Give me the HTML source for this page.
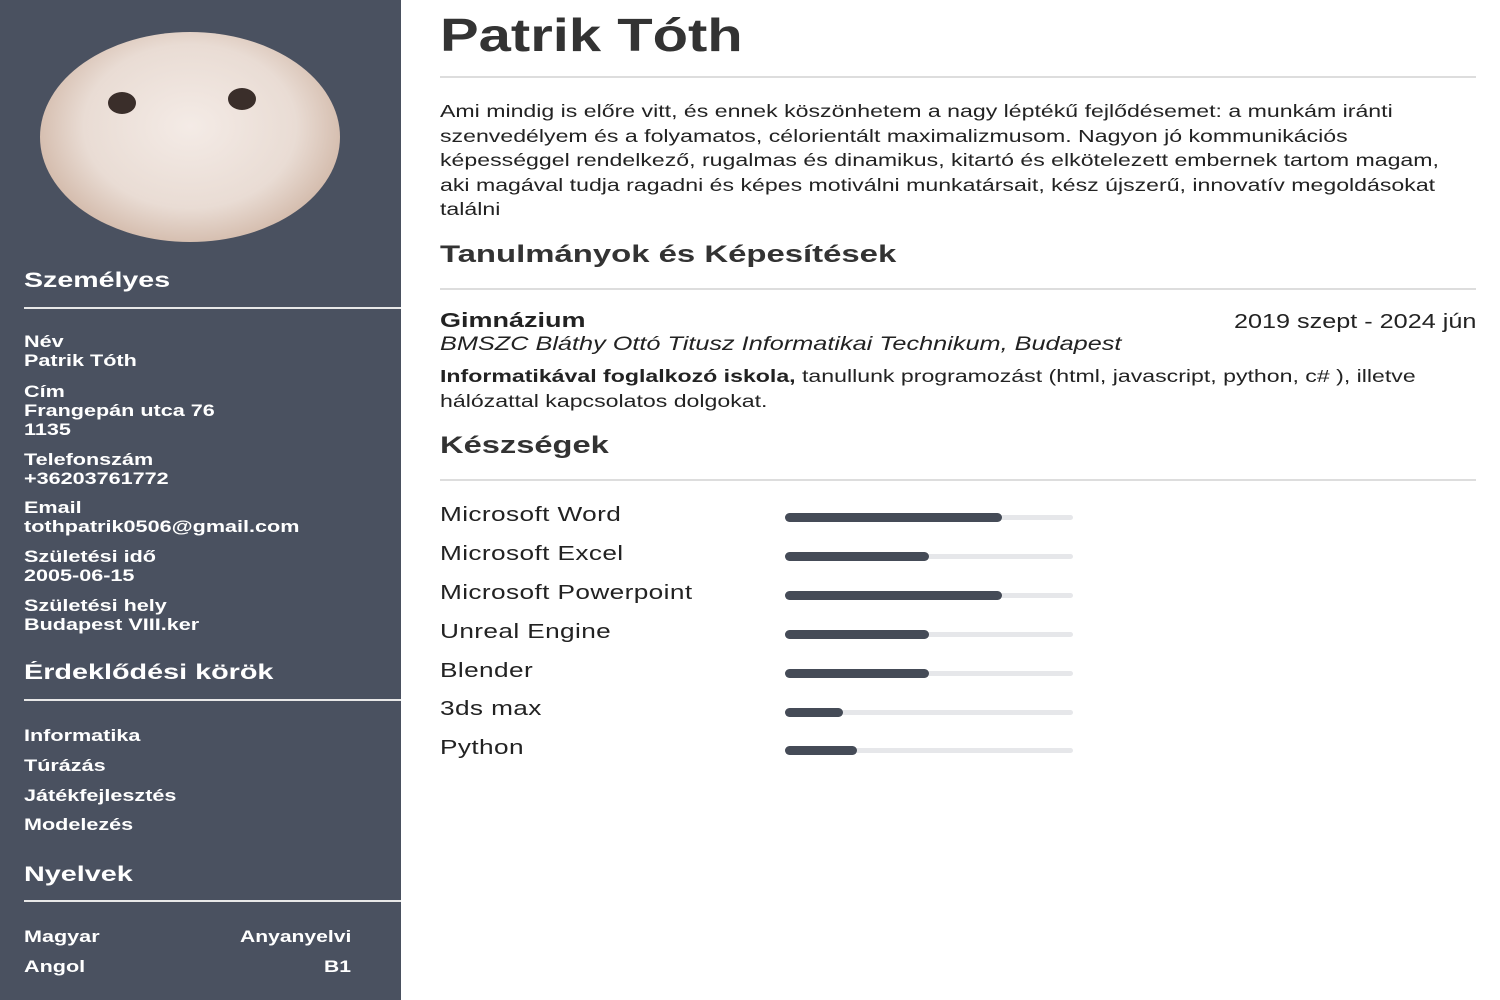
<!DOCTYPE html>
<html><head><meta charset="utf-8"><style>
*{margin:0;padding:0;box-sizing:border-box}
body{width:1500px;height:1000px;background:#fff;font-family:"Liberation Sans",sans-serif;position:relative;overflow:hidden;color:#222}
.side{position:absolute;left:0;top:0;width:401px;height:1000px;background:#4a5160;color:#fff}
.x{white-space:nowrap;transform-origin:0 0}
.side .h{font-size:21px;font-weight:bold;position:absolute;left:24px;transform:scaleX(1.36)}
.side .hr{position:absolute;left:24px;right:0;height:2px;background:#e8e8e8}
.side .l{position:absolute;left:24px;font-size:17px;font-weight:bold;line-height:19px;transform:scaleX(1.27)}
.m{position:absolute;left:440px}
.bar{position:absolute;left:785px;width:288px;height:5px;background:#e6e7ea;border-radius:3px}
.bar i{display:block;height:9px;margin-top:-2px;background:#454b57;border-radius:5px}
.sk{position:absolute;left:440px;font-size:20px;color:#222;transform:scaleX(1.31);letter-spacing:.3px}
.p{font-size:17.5px;line-height:24.6px;transform:scaleX(1.32)}
</style></head><body>
<div class="side">
<div style="position:absolute;left:40px;top:32px;width:300px;height:210px;border-radius:50%;background:radial-gradient(ellipse at 50% 45%,#f4ebe6 0%,#e9dcd4 50%,#c9ab98 85%,#a9866f 100%)"></div>
<div style="position:absolute;left:108px;top:92px;width:28px;height:22px;border-radius:50%;background:#3a2e2a"></div>
<div style="position:absolute;left:228px;top:88px;width:28px;height:22px;border-radius:50%;background:#3a2e2a"></div>
<div class="h x" style="top:269px">Személyes</div>
<div class="hr" style="top:307px"></div>
<div class="l x" style="top:332px">Név<br>Patrik Tóth</div>
<div class="l x" style="top:382px">Cím<br>Frangepán utca 76<br>1135</div>
<div class="l x" style="top:450px">Telefonszám<br>+36203761772</div>
<div class="l x" style="top:498px">Email<br>tothpatrik0506@gmail.com</div>
<div class="l x" style="top:547px">Születési idő<br>2005-06-15</div>
<div class="l x" style="top:596px">Születési hely<br>Budapest VIII.ker</div>
<div class="h x" style="top:661px;transform:scaleX(1.37)">Érdeklődési körök</div>
<div class="hr" style="top:699px"></div>
<div class="l x" style="top:726px">Informatika</div>
<div class="l x" style="top:756px">Túrázás</div>
<div class="l x" style="top:786px">Játékfejlesztés</div>
<div class="l x" style="top:815px">Modelezés</div>
<div class="h x" style="top:863px;transform:scaleX(1.37)">Nyelvek</div>
<div class="hr" style="top:900px"></div>
<div class="l x" style="top:927px">Magyar</div><div class="l x" style="top:927px;left:240px;transform:scaleX(1.24)">Anyanyelvi</div>
<div class="l x" style="top:957px">Angol</div><div class="l x" style="top:957px;left:324px;transform:scaleX(1.24)">B1</div>
</div>
<div class="m x" style="top:8px;font-size:46px;font-weight:bold;color:#333;transform:scaleX(1.26)">Patrik Tóth</div>
<div style="position:absolute;left:440px;right:24px;top:76px;height:2px;background:#ddd"></div>
<div class="m x p" style="top:99px;color:#222">Ami mindig is előre vitt, és ennek köszönhetem a nagy léptékű fejlődésemet: a munkám iránti<br>szenvedélyem és a folyamatos, célorientált maximalizmusom. Nagyon jó kommunikációs<br>képességgel rendelkező, rugalmas és dinamikus, kitartó és elkötelezett embernek tartom magam,<br>aki magával tudja ragadni és képes motiválni munkatársait, kész újszerű, innovatív megoldásokat<br>találni</div>
<div class="m x" style="top:241px;font-size:24px;font-weight:bold;color:#333;transform:scaleX(1.37)">Tanulmányok és Képesítések</div>
<div style="position:absolute;left:440px;right:24px;top:288px;height:2px;background:#ddd"></div>
<div class="m x" style="top:310px;font-size:20px;font-weight:bold;transform:scaleX(1.35)">Gimnázium</div>
<div class="x" style="position:absolute;right:24px;top:311px;font-size:20px;transform:scaleX(1.26);transform-origin:100% 0">2019 szept - 2024 jún</div>
<div class="m x" style="top:334px;font-size:19px;font-style:italic;transform:scaleX(1.33)">BMSZC Bláthy Ottó Titusz Informatikai Technikum, Budapest</div>
<div class="m x p" style="top:364px"><b>Informatikával foglalkozó iskola,</b> tanullunk programozást (html, javascript, python, c# ), illetve<br>hálózattal kapcsolatos dolgokat.</div>
<div class="m x" style="top:432px;font-size:24px;font-weight:bold;color:#333;transform:scaleX(1.36)">Készségek</div>
<div style="position:absolute;left:440px;right:24px;top:479px;height:2px;background:#ddd"></div>
<div class="sk x" style="top:504px">Microsoft Word</div><div class="bar" style="top:515px"><i style="width:217px"></i></div>
<div class="sk x" style="top:543px">Microsoft Excel</div><div class="bar" style="top:554px"><i style="width:144px"></i></div>
<div class="sk x" style="top:582px">Microsoft Powerpoint</div><div class="bar" style="top:593px"><i style="width:217px"></i></div>
<div class="sk x" style="top:621px">Unreal Engine</div><div class="bar" style="top:632px"><i style="width:144px"></i></div>
<div class="sk x" style="top:660px">Blender</div><div class="bar" style="top:671px"><i style="width:144px"></i></div>
<div class="sk x" style="top:698px">3ds max</div><div class="bar" style="top:710px"><i style="width:58px"></i></div>
<div class="sk x" style="top:737px">Python</div><div class="bar" style="top:748px"><i style="width:72px"></i></div>
</body></html>
